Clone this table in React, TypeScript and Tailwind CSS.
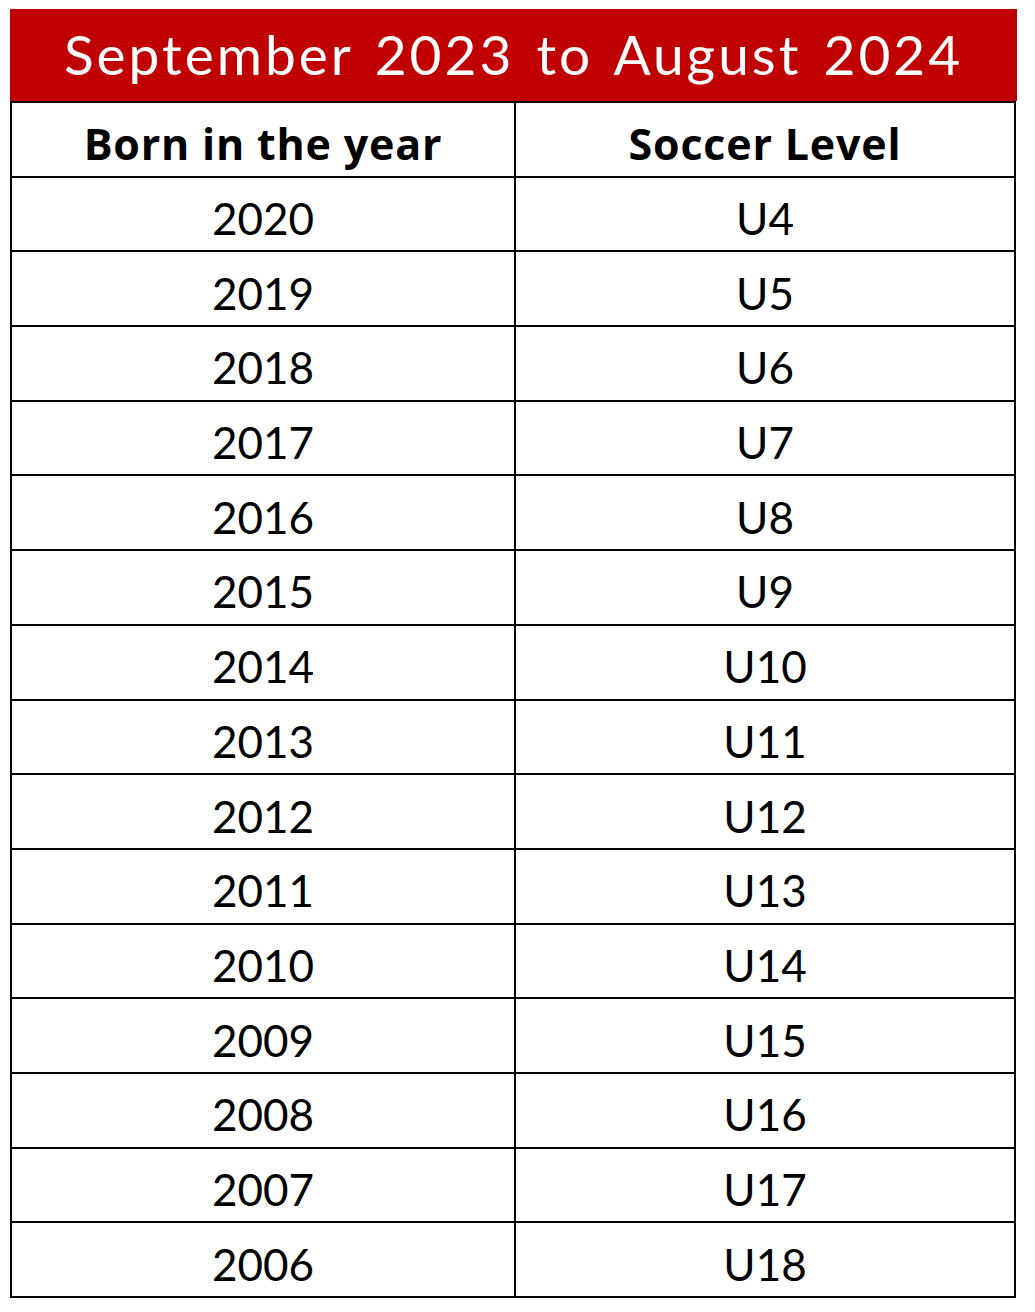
import React from 'react';

const rows: [string, string][] = [
  ['2020', 'U4'],
  ['2019', 'U5'],
  ['2018', 'U6'],
  ['2017', 'U7'],
  ['2016', 'U8'],
  ['2015', 'U9'],
  ['2014', 'U10'],
  ['2013', 'U11'],
  ['2012', 'U12'],
  ['2011', 'U13'],
  ['2010', 'U14'],
  ['2009', 'U15'],
  ['2008', 'U16'],
  ['2007', 'U17'],
  ['2006', 'U18'],
];

export default function App() {
  return (
    <div className="min-h-[1312px] bg-white pt-[9px] pl-[10px] font-['Lato','Open_Sans',sans-serif] text-black">
      <div className="w-[1007px]">
        {/* Title band */}
        <div className="h-[92px] bg-[#c00000] flex items-center justify-center text-white text-[55px] leading-none tracking-[3px] [word-spacing:5px] pb-[2px]">
          September 2023 to August 2024
        </div>

        {/* Table */}
        <div className="w-[1006px] border-x-2 border-t-2 border-black">
          <div className="flex h-[74.69px] border-b-2 border-black font-['Open_Sans','Lato',sans-serif] font-bold text-[43px] leading-none tracking-[0.8px]">
            <div className="w-[504px] border-r-2 border-black flex items-center justify-center pt-[8px]">
              Born in the year
            </div>
            <div className="flex-1 flex items-center justify-center pt-[8px]">
              Soccer Level
            </div>
          </div>
          {rows.map(([year, level]) => (
            <div key={year} className="flex h-[74.69px] border-b-2 border-black text-[44px] leading-none">
              <div className="w-[504px] border-r-2 border-black flex items-center justify-center pt-[8px]">
                {year}
              </div>
              <div className="flex-1 flex items-center justify-center pt-[8px]">
                {level}
              </div>
            </div>
          ))}
        </div>
      </div>
    </div>
  );
}
